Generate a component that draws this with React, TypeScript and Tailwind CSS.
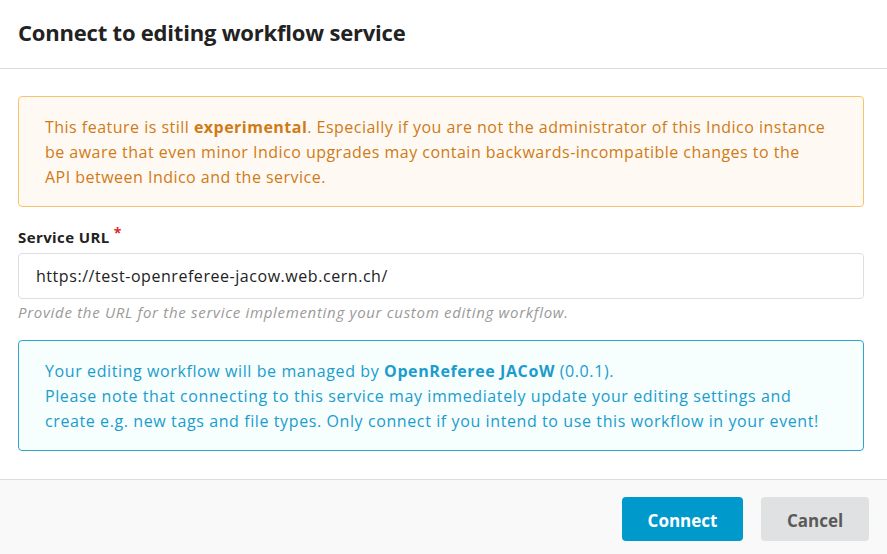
export default function App() {
    return (
        <div
            className="w-[887px] h-[554px] bg-white flex flex-col text-[#222]"
            style={{ fontFamily: "'Open Sans', 'Noto Sans', sans-serif" }}
        >
            {/* Header */}
            <div className="h-[69px] shrink-0 border-b border-[#dcdcdc] flex items-center px-[18px] pb-[4px]">
                <h1 className="text-[22px] font-bold text-[#222] leading-none tracking-[-0.2px]">Connect to editing workflow service</h1>
            </div>

            {/* Content */}
            <div className="flex-1 pl-[18px] pr-[23px] pt-[27px]">
                <div className="h-[111px] rounded-[4px] border border-[#f7c46c] bg-[#fff9f3] px-[26px] pt-[18px] text-[16px] leading-[25px] tracking-[0.48px] text-[#cf7b17] whitespace-nowrap">
                    This feature is still <strong className="font-bold">experimental</strong>. Especially if you are not the administrator of this Indico instance
                    <br />
                    be aware that even minor Indico upgrades may contain backwards-incompatible changes to the
                    <br />
                    API between Indico and the service.
                </div>

                <div className="mt-[19px]">
                    <label className="flex items-start text-[15px] font-bold leading-[22px] tracking-[0.4px] text-[#222]">
                        <span>Service URL</span>
                        <span className="ml-[4px] text-[#db2828] text-[14px] leading-[14px]">*</span>
                    </label>
                    <input
                        className="mt-[5px] w-full h-[46px] rounded-[4px] border border-[#dedede] px-[17px] text-[16px] tracking-[0.55px] text-[#222] outline-none"
                        defaultValue="https://test-openreferee-jacow.web.cern.ch/"
                    />
                    <p className="mt-[3px] text-[15px] italic text-[#9a9a9a] leading-[21px] tracking-[0.7px]">
                        Provide the URL for the service implementing your custom editing workflow.
                    </p>
                </div>

                <div className="mt-[17px] h-[111px] rounded-[4px] border border-[#2ca6cf] bg-[#f6fefe] px-[26px] pt-[18px] text-[16px] leading-[25px] tracking-[0.6px] text-[#1b9ccc] whitespace-nowrap">
                    Your editing workflow will be managed by <strong className="font-bold">OpenReferee JACoW</strong> (0.0.1).
                    <br />
                    Please note that connecting to this service may immediately update your editing settings and
                    <br />
                    create e.g. new tags and file types. Only connect if you intend to use this workflow in your event!
                </div>
            </div>

            {/* Footer */}
            <div className="h-[75px] shrink-0 border-t border-[#dcdcdc] bg-[#f9f9f9] flex items-start justify-end gap-[18px] pr-[18px] pt-[17px]">
                <button className="w-[121px] h-[44px] rounded-[4px] bg-[#0099cc] text-white text-[17px] font-bold pt-[3px]">
                    Connect
                </button>
                <button className="w-[108px] h-[44px] rounded-[4px] bg-[#e0e1e2] text-[#5a5a5a] text-[17px] font-bold pt-[3px]">
                    Cancel
                </button>
            </div>
        </div>
    );
}
